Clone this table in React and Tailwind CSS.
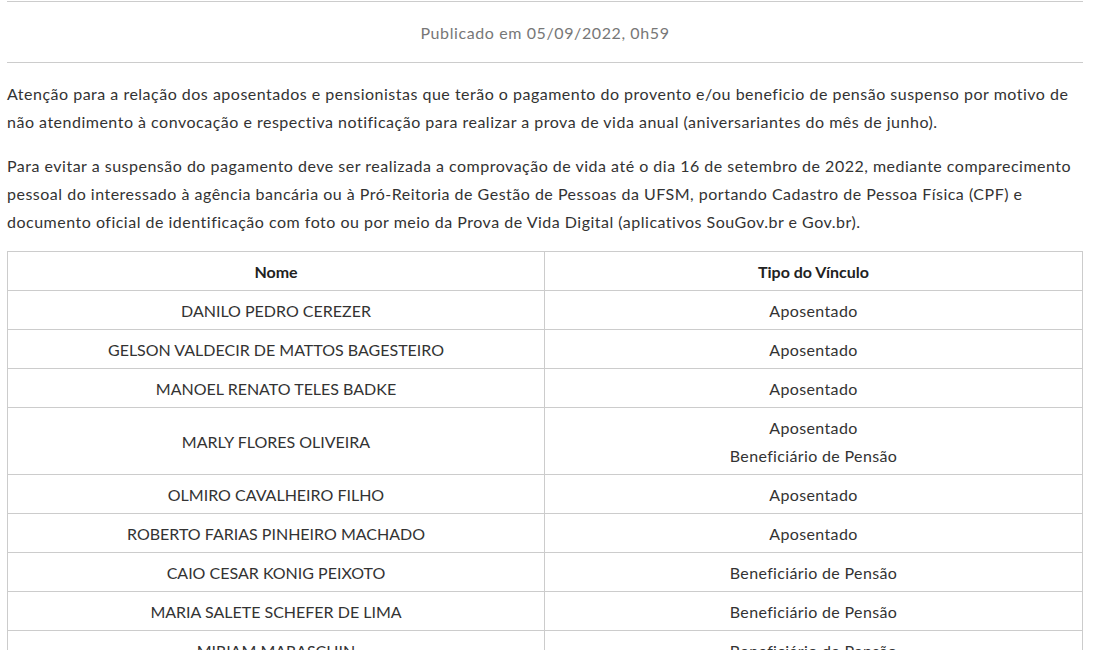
const rows = [
  ['DANILO PEDRO CEREZER', ['Aposentado']],
  ['GELSON VALDECIR DE MATTOS BAGESTEIRO', ['Aposentado']],
  ['MANOEL RENATO TELES BADKE', ['Aposentado']],
  ['MARLY FLORES OLIVEIRA', ['Aposentado', 'Beneficiário de Pensão']],
  ['OLMIRO CAVALHEIRO FILHO', ['Aposentado']],
  ['ROBERTO FARIAS PINHEIRO MACHADO', ['Aposentado']],
  ['CAIO CESAR KONIG PEIXOTO', ['Beneficiário de Pensão']],
  ['MARIA SALETE SCHEFER DE LIMA', ['Beneficiário de Pensão']],
  ['MIRIAM MARASCHIN', ['Beneficiário de Pensão']],
  ['NELSON ANTONIO DA SILVA', ['Aposentado']],
]

export default function App() {
  return (
    <div className="h-[650px] overflow-hidden bg-white pl-[7px] pr-[12px] font-['Lato',sans-serif] text-[16px] leading-[28px] text-[#333]">
      <div className="mt-px border-y border-[#ccc] pt-[17px] pb-[15px] text-center tracking-[0.6px] text-[#777]">
        Publicado em 05/09/2022, 0h59
      </div>
      <p className="mt-[17px] whitespace-nowrap tracking-[0.5px]">
        Atenção para a relação dos aposentados e pensionistas que terão o pagamento do provento e/ou beneficio de pensão suspenso por motivo de
        <br />
        não atendimento à convocação e respectiva notificação para realizar a prova de vida anual (aniversariantes do mês de junho).
      </p>
      <p className="mt-[16px] whitespace-nowrap tracking-[0.5px]">
        Para evitar a suspensão do pagamento deve ser realizada a comprovação de vida até o dia 16 de setembro de 2022, mediante comparecimento
        <br />
        pessoal do interessado à agência bancária ou à Pró-Reitoria de Gestão de Pessoas da UFSM, portando Cadastro de Pessoa Física (CPF) e
        <br />
        documento oficial de identificação com foto ou por meio da Prova de Vida Digital (aplicativos SouGov.br e Gov.br).
      </p>
      <table className="mt-[15px] w-full border-collapse border border-[#ccc] text-center">
        <thead>
          <tr>
            <th className="w-[537px] border border-[#ccc] pt-[6px] pb-[4px] font-bold text-[#222]">Nome</th>
            <th className="border border-[#ccc] pt-[6px] pb-[4px] font-bold text-[#222]">Tipo do Vínculo</th>
          </tr>
        </thead>
        <tbody>
          {rows.map(([name, tipos]) => (
            <tr key={name}>
              <td className="border border-[#ccc] pt-[6px] pb-[4px]">{name}</td>
              <td className="border border-[#ccc] pt-[6px] pb-[4px] tracking-[0.35px]">
                {tipos.map((t) => (
                  <div key={t}>{t}</div>
                ))}
              </td>
            </tr>
          ))}
        </tbody>
      </table>
    </div>
  )
}
